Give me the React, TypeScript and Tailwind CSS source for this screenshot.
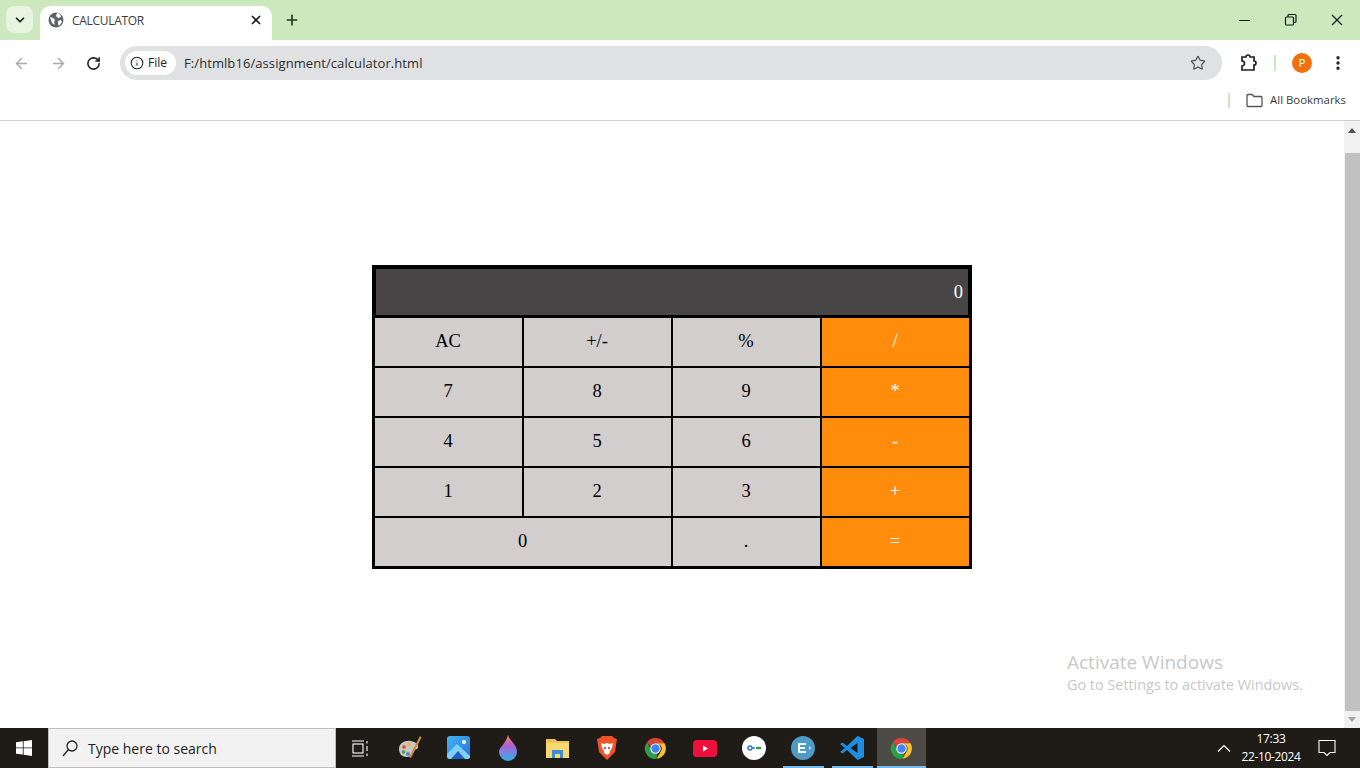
import { ArrowLeft, ArrowRight, ChevronDown, Info, MoreVertical, Plus, RotateCw, Star, X } from 'lucide-react';

const uiFont = "font-['Open_Sans','Noto_Sans',sans-serif]";

const rows = [
  [['7', 1], ['8', 1], ['9', 1], ['*', 2]],
  [['4', 1], ['5', 1], ['6', 1], ['-', 2]],
  [['1', 1], ['2', 1], ['3', 1], ['+', 2]],
];

function Key({ label, orange = false, wide = false }: { label: string; orange?: boolean; wide?: boolean }) {
  return (
    <div
      className={`flex items-center justify-center h-12 pb-px pr-px ${wide ? 'col-span-2' : ''} ${
        orange ? 'bg-[#ff8c0a] text-white' : 'bg-[#d1cecd] text-black'
      }`}
    >
      {label}
    </div>
  );
}

function Calculator() {
  return (
    <div className="w-[600px] h-[304px] ml-[372px] border-[3px] border-black bg-black grid grid-cols-4 content-start gap-x-[2px] gap-y-[2px] font-['Liberation_Serif',serif] text-[18.5px] leading-none">
      <div className="col-span-4 h-[46px] m-px bg-[#474546] text-white flex items-center justify-end pr-[5px]">0</div>
      <Key label="AC" />
      <Key label="+/-" />
      <Key label="%" />
      <Key label="/" orange />
      {rows.map((row) =>
        row.map(([label, kind]) => <Key key={label} label={label as string} orange={kind === 2} />)
      )}
      <Key label="0" wide />
      <Key label="." />
      <Key label="=" orange />
    </div>
  );
}

function Scrollbar() {
  return (
    <div className="w-4 bg-[#f1f1f1] flex flex-col items-center shrink-0">
      <div className="h-8 pt-[7px]">
        <div className="w-0 h-0 border-x-[4px] border-x-transparent border-b-[5px] border-b-[#505050]" />
      </div>
      <div className="w-[15px] flex-1 ml-px bg-[#c1c1c1]" />
      <div className="h-[17px] pt-[6px]">
        <div className="w-0 h-0 border-x-[4px] border-x-transparent border-t-[5px] border-t-[#a3a3a3]" />
      </div>
    </div>
  );
}

function ChromeLogo({ size = 25 }: { size?: number }) {
  return (
    <svg width={size} height={size} viewBox="0 0 48 48">
      <path d="M24 4a20 20 0 0 1 17.3 10H24a10 10 0 0 0-9.4 6.6L7.6 12A20 20 0 0 1 24 4z" fill="#db4437" />
      <path d="M41.3 14A20 20 0 0 1 26 43.9L34.6 29A10 10 0 0 0 33 17.5L24 14z" fill="#fbc02d" />
      <path d="M26 43.9A20 20 0 0 1 7.6 12l8.7 15A10 10 0 0 0 28 33.1z" fill="#2f9e48" />
      <circle cx="24" cy="24" r="10" fill="#fff" />
      <circle cx="24" cy="24" r="8" fill="#4285f4" />
    </svg>
  );
}

const taskIcons = [
  // task view
  <svg key="tv" width="17" height="17" viewBox="0 0 17 17" fill="none" stroke="#fff" strokeWidth="1.1">
    <path d="M0 1h12M0 16h12" />
    <rect x="1" y="4" width="10" height="9" />
    <path d="M15 1v2.5M15 6v5M15 13.5V16" />
  </svg>,
  // paint palette
  <svg key="paint" width="26" height="26" viewBox="0 0 26 26">
    <path d="M2 14c0-6 6-9 12-8 5 1 8 4 7 7-1 2-4 1-5 3-1 3-1 6-6 6-5 0-8-3-8-8z" fill="#c9c6c0" />
    <circle cx="7" cy="12" r="1.8" fill="#d84a3c" />
    <circle cx="12" cy="9.5" r="1.8" fill="#e9b93a" />
    <circle cx="6.5" cy="17" r="1.8" fill="#3f9d57" />
    <circle cx="11" cy="19" r="1.8" fill="#3c7fd0" />
    <path d="M23 1l1.500 1.500L14 23l-2-1z" fill="#c98d45" />
  </svg>,
  // photos
  <svg key="photos" width="24" height="24" viewBox="0 0 24 24">
    <defs>
      <linearGradient id="ph" x1="0" y1="0" x2="1" y2="1">
        <stop offset="0" stopColor="#3fb6f0" />
        <stop offset="1" stopColor="#2a6fd8" />
      </linearGradient>
    </defs>
    <rect width="23" height="23" rx="3" fill="url(#ph)" />
    <path d="M0 18L10 8l13 12v1a2 2 0 0 1-2 2H3a3 3 0 0 1-3-3z" fill="#7fd0f7" />
    <path d="M4 23l7-8 7 8z" fill="#1f5fc4" />
    <circle cx="17" cy="6" r="2" fill="#fff" />
  </svg>,
  // drop
  <svg key="drop" width="20" height="26" viewBox="0 0 20 26">
    <defs>
      <linearGradient id="dr" x1="0" y1="0" x2="0" y2="1">
        <stop offset="0" stopColor="#f58a3c" />
        <stop offset="0.4" stopColor="#b05ed8" />
        <stop offset="1" stopColor="#2fb4e8" />
      </linearGradient>
    </defs>
    <path d="M10 0c1 5 9 9 9 17a9 9 0 0 1-18 0C1 12 7 10 10 0z" fill="url(#dr)" />
  </svg>,
  // folder
  <svg key="folder" width="23" height="20" viewBox="0 0 23 20">
    <path d="M0 1h9l2 2h12v17H0z" fill="#f0c24f" />
    <rect y="5" width="23" height="15" fill="#f8d775" />
    <rect x="6" y="12" width="11" height="8" fill="#3f8fd0" />
    <rect x="9" y="16" width="5" height="4" fill="#f8d775" />
  </svg>,
  // brave
  <svg key="brave" width="20" height="24" viewBox="0 0 20 24">
    <path d="M5 0h10l2 2 3 1-1 6-1 7-8 8-8-8-1-7-1-6 3-1z" fill="#f0502a" />
    <path d="M4 7l3 1 3-1 3 1 3-1-1 5-2 3v2l-3 2-3-2v-2l-2-3z" fill="#fff" />
    <path d="M7 11h2v2H7zM11 11h2v2h-2z" fill="#f0502a" />
  </svg>,
  <ChromeLogo key="chrome1" />,
  // youtube
  <svg key="yt" width="24" height="17" viewBox="0 0 24 17">
    <rect width="24" height="17" rx="3.5" fill="#ee0f3a" />
    <path d="M10 5.500l5 3-5 3z" fill="#fff" />
  </svg>,
  // key app
  <svg key="keyapp" width="24" height="24" viewBox="0 0 24 24">
    <circle cx="12" cy="12" r="12" fill="#fff" />
    <circle cx="8" cy="12" r="2" fill="none" stroke="#2f6fd0" strokeWidth="1.4" />
    <path d="M10 12h3" stroke="#2f6fd0" strokeWidth="1.4" />
    <path d="M14 12h5" stroke="#2e9e55" strokeWidth="2.4" />
  </svg>,
  // E app
  <svg key="eapp" width="24" height="24" viewBox="0 0 24 24">
    <circle cx="12" cy="12" r="12" fill="#4f9bc8" />
    <path d="M7 7h8v2H9v2h5v2H9v2h6v2H7z" fill="#fff" />
    <path d="M18 10l2 2-2 2z" fill="#fff" />
  </svg>,
  // vs code
  <svg key="vscode" width="24" height="24" viewBox="0 0 24 24">
    <path d="M17.500 0L24 3v18l-6.500 3L7 14l-4.500 3.500L0 16l5-4-5-4 2.500-1.500L7 10z" fill="#1f8ee0" />
    <path d="M17.500 7v10L10.500 12z" fill="#1f1c17" />
  </svg>,
  <ChromeLogo key="chrome2" />,
];

export default function App() {
  return (
    <div className={`h-screen w-full flex flex-col overflow-hidden bg-white ${uiFont}`}>
      {/* tab strip */}
      <div className="h-10 bg-[#cbe9bd] flex shrink-0 relative">
        <div className="w-[27px] h-[27px] mt-[6px] ml-[6px] rounded-lg bg-[#e6f4e0] flex items-center justify-center">
          <ChevronDown size={14} strokeWidth={3} className="text-[#1f1f1f]" />
        </div>
        <div className="w-[232px] h-[34px] mt-[6px] ml-[7px] bg-white rounded-t-[10px] flex items-center pl-2 pb-[6px] text-[12px] text-[#3c3c3c]">
          <svg width="16" height="16" viewBox="0 0 16 16" className="shrink-0">
            <circle cx="8" cy="8" r="7.500" fill="#5f6368" />
            <path d="M2 5l3 1 2 2-1 2 1 3-3-2-1-3zM9 1l3 1 1 3-3 1-2-2zM10 9l3-1 1 2-3 4-1-2z" fill="#fff" />
          </svg>
          <span className="ml-2 pt-px flex-1 tracking-[-0.3px]">CALCULATOR</span>
          <X size={14} strokeWidth={3} className="mr-[9px] text-[#202020]" />
        </div>
        <Plus size={16} strokeWidth={2.500} className="mt-3 ml-3 text-[#22331f]" />
        <div className="ml-auto flex items-center pr-[15px] gap-[30px] text-[#1a1a1a] pb-[1px]">
          <svg width="16" height="16" viewBox="0 0 16 16" stroke="currentColor" fill="none">
            <path d="M2 8.500h11" />
          </svg>
          <svg width="16" height="16" viewBox="0 0 16 16" stroke="currentColor" fill="none" strokeWidth="1.200">
            <rect x="2.500" y="5" width="8" height="8" rx="1" />
            <path d="M5 5V3.500a1 1 0 0 1 1-1h6a1 1 0 0 1 1 1v6a1 1 0 0 1-1 1h-1.500" />
          </svg>
          <svg width="16" height="16" viewBox="0 0 16 16" stroke="currentColor" fill="none" strokeWidth="1.200">
            <path d="M3 3l10 10M13 3L3 13" />
          </svg>
        </div>
      </div>

      {/* toolbar */}
      <div className="h-[46px] bg-white rounded-t-lg flex items-center shrink-0">
        <ArrowLeft size={17} strokeWidth={2} className="ml-[13px] text-[#a8a8a8]" />
        <ArrowRight size={17} strokeWidth={2} className="ml-[20px] text-[#a8a8a8]" />
        <RotateCw size={15} strokeWidth={2.500} className="ml-[19px] text-[#222]" />
        <div className="ml-[19px] w-[1102px] h-[34px] rounded-full bg-[#e0e1e3] flex items-center pl-[5px] pr-4">
          <div className="h-6 w-[51px] bg-white rounded-full flex items-center pl-[5px] gap-1 text-[12px] font-medium text-[#222]">
            <Info size={14} strokeWidth={1.800} className="shrink-0" />
            File
          </div>
          <span className="ml-2 pt-px text-[13px] text-[#2c2c2c] tracking-[0.08px]">F:/htmlb16/assignment/calculator.html</span>
          <Star size={16} strokeWidth={1.800} className="ml-auto text-[#555]" />
        </div>
        <svg width="18" height="18" viewBox="0 0 18 18" fill="none" stroke="#1f1f1f" strokeWidth="1.700" className="ml-[18px]">
          <path d="M2 3h4a2 2 0 0 1 4 0h4v4a2 2 0 0 1 0 4v5H2v-4a2 2 0 0 0 0-5z" />
        </svg>
        <div className="w-[2px] h-4 bg-[#cbe9bd] ml-[16px]" />
        <div className="w-5 h-5 rounded-full bg-[#f2700e] text-white text-[11px] flex items-center justify-center ml-[16px]">P</div>
        <MoreVertical size={18} strokeWidth={2.500} className="ml-[17px] text-[#222]" />
      </div>

      {/* bookmarks */}
      <div className="h-[35px] bg-white border-b border-[#d0d0d0] flex items-center justify-end pr-[14px] pb-[6px] shrink-0 text-[11.4px] text-[#3a3a3a]">
        <div className="w-[2px] h-[15px] bg-[#cbe9bd] mr-4" />
        <svg width="17" height="15" viewBox="0 0 17 15" fill="none" stroke="#555" strokeWidth="1.300" className="mr-[7px]">
          <path d="M1 2.500a1 1 0 0 1 1-1h4l2 2h7a1 1 0 0 1 1 1v8a1 1 0 0 1-1 1H2a1 1 0 0 1-1-1z" />
        </svg>
        All Bookmarks
      </div>

      {/* page */}
      <div className="flex-1 flex min-h-0 relative">
        <div className="flex-1 pt-[144px]">
          <Calculator />
        </div>
        <Scrollbar />
        <div className="absolute left-[1067px] top-[529px] text-[#c8c8c8] font-['Open_Sans',sans-serif]">
          <div className="text-[19px] leading-6">Activate Windows</div>
          <div className="text-[14.4px] leading-[22px]">Go to Settings to activate Windows.</div>
        </div>
      </div>

      {/* taskbar */}
      <div className="h-10 bg-[#1f1c17] flex items-center shrink-0 text-white">
        <div className="w-12 flex justify-center">
          <svg width="16" height="16" viewBox="0 0 16 16" fill="#fff">
            <path d="M0 2.300l6.800-1v6.200H0zM7.600 1.200L16 0v7.500H7.600zM0 8.300h6.800v6.300L0 13.700zM7.600 8.300H16V16l-8.400-1.200z" />
          </svg>
        </div>
        <div className="w-[288px] h-10 bg-[#f2f2f2] border border-[#bdbdbd] flex items-center pl-[13px] text-[#222] text-[14px]">
          <svg width="16" height="17" viewBox="0 0 16 17" fill="none" stroke="#222" strokeWidth="1.300">
            <circle cx="10" cy="6" r="5" />
            <path d="M6.500 9.500L1 16" />
          </svg>
          <span className="ml-[10px]">Type here to search</span>
        </div>
        {taskIcons.map((icon, i) => (
          <div
            key={i}
            className={`relative w-[49.2px] h-10 flex items-center justify-center ${i === 11 ? 'bg-[#4d4b45]' : ''}`}
          >
            {icon}
            {i >= 9 && (
              <div className={`absolute bottom-0 h-[2px] bg-[#76b9ed] ${i === 11 ? 'inset-x-0' : 'inset-x-1'}`} />
            )}
          </div>
        ))}
        <div className="ml-auto flex items-center h-10">
          <svg width="14" height="8" viewBox="0 0 14 8" fill="none" stroke="#fff" strokeWidth="1.100" className="mr-[8px]">
            <path d="M1 7.500l6-6 6 6" />
          </svg>
          <div className="w-[64px] text-center text-[12px] leading-[18px] tracking-[-0.35px]">
            <div>17:33</div>
            <div>22-10-2024</div>
          </div>
          <svg width="18" height="18" viewBox="0 0 18 18" fill="none" stroke="#fff" strokeWidth="1.100" className="ml-[15px] mr-[24px]">
            <path d="M1 1.500h16v12h-5l-3 3-3-3H1z" />
          </svg>
        </div>
      </div>
    </div>
  );
}
